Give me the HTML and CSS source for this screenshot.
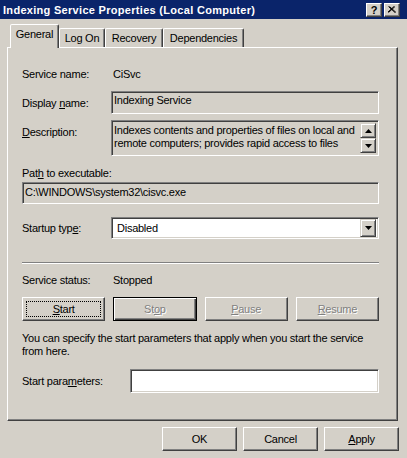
FILE: index.html
```html
<!DOCTYPE html>
<html lang="en">
<head>
    <meta charset="UTF-8">
    <title>Indexing Service Properties (Local Computer)</title>
    <link rel="stylesheet" href="styles.css">
</head>
<body>
    <div class="window">
        <div class="titlebar">
            <span class="title">Indexing Service Properties (Local Computer)</span>
            <div class="caption-btns">
                <div class="cap-btn">?</div>
                <div class="cap-btn">
                    <svg width="8" height="7" viewBox="0 0 8 7">
                        <path d="M0.5 0.5 L7 6.5 M7 0.5 L0.5 6.5 M1.5 0.5 L8 6.5 M6 0.5 L-0.5 6.5" stroke="#000" stroke-width="1" fill="none"/>
                    </svg>
                </div>
            </div>
        </div>

        <div class="tabs">
            <div class="tab active">General</div>
            <div class="tab t-logon">Log On</div>
            <div class="tab t-recovery">Recovery</div>
            <div class="tab t-deps">Dependencies</div>
        </div>

        <div class="panel">
            <div class="row row-name">
                <span class="label">Service name:</span>
                <span class="value">CiSvc</span>
            </div>

            <div class="row row-display">
                <span class="label">Display <u>n</u>ame:</span>
                <div class="field readonly">Indexing Service</div>
            </div>

            <div class="row row-desc">
                <span class="label"><u>D</u>escription:</span>
                <div class="field readonly desc">
                    <div class="desc-text">Indexes contents and properties of files on local and remote computers; provides rapid access to files</div>
                    <div class="scroll">
                        <div class="arrow-btn">
                            <svg width="7" height="4" viewBox="0 0 7 4"><polygon points="3.5,0 7,4 0,4" fill="#000"/></svg>
                        </div>
                        <div class="arrow-btn">
                            <svg width="7" height="4" viewBox="0 0 7 4"><polygon points="0,0 7,0 3.5,4" fill="#000"/></svg>
                        </div>
                    </div>
                </div>
            </div>

            <div class="path-label">Pat<u>h</u> to executable:</div>
            <div class="field readonly path">C:\WINDOWS\system32\cisvc.exe</div>

            <div class="row row-startup">
                <span class="label">Startup typ<u>e</u>:</span>
                <div class="field select">
                    <span class="select-text">Disabled</span>
                    <div class="arrow-btn drop">
                        <svg width="7" height="4" viewBox="0 0 7 4"><polygon points="0,0 7,0 3.5,4" fill="#000"/></svg>
                    </div>
                </div>
            </div>

            <div class="separator"></div>

            <div class="row row-status">
                <span class="label">Service status:</span>
                <span class="value">Stopped</span>
            </div>

            <div class="svc-buttons">
                <div class="btn focus"><u>S</u>tart</div>
                <div class="btn default disabled">St<u>o</u>p</div>
                <div class="btn disabled"><u>P</u>ause</div>
                <div class="btn disabled"><u>R</u>esume</div>
            </div>

            <p class="note">You can specify the start parameters that apply when you start the service from here.</p>

            <div class="row row-params">
                <span class="label params-label">Start para<u>m</u>eters:</span>
                <div class="field input"></div>
            </div>
        </div>

        <div class="footer">
            <div class="btn">OK</div>
            <div class="btn">Cancel</div>
            <div class="btn"><u>A</u>pply</div>
        </div>
    </div>
</body>
</html>
```

FILE: styles.css
```css
body {
    margin: 0;
    background-color: #d4d0c8;
    font-family: "Liberation Sans", Arial, sans-serif;
    font-size: 11px;
    letter-spacing: -0.25px;
    color: #000;
}

.window {
    width: 407px;
    height: 458px;
    overflow: hidden;
}

/* title bar */
.titlebar {
    height: 19px;
    background-color: #0a246a;
    color: #fff;
    display: flex;
    align-items: center;
    justify-content: space-between;
    padding: 0 7px 0 3px;
}

.title {
    font-weight: bold;
    font-size: 11px;
    letter-spacing: 0.3px;
}

.caption-btns {
    display: flex;
    gap: 2px;
}

.cap-btn {
    width: 16px;
    height: 14px;
    box-sizing: border-box;
    background-color: #d4d0c8;
    border: 1px solid;
    border-color: #fff #404040 #404040 #fff;
    box-shadow: inset -1px -1px #808080;
    color: #000;
    font-weight: bold;
    font-size: 11px;
    display: flex;
    align-items: center;
    justify-content: center;
}

/* tabs */
.tabs {
    display: flex;
    align-items: flex-end;
    height: 23px;
    margin: 5px 0 0 10px;
}

.tab {
    height: 19px;
    box-sizing: border-box;
    border: 1px solid;
    border-bottom: none;
    border-color: #fff #404040 transparent #fff;
    box-shadow: inset -1px 0 #808080;
    border-radius: 2px 2px 0 0;
    display: flex;
    align-items: center;
    justify-content: center;
    padding-bottom: 1px;
}

.tab.active {
    position: relative;
    height: 24px;
    width: 49px;
    margin-bottom: -1px;
    background-color: #d4d0c8;
    padding-bottom: 5px;
}

.t-logon { width: 46px; }
.t-recovery { width: 58px; }
.t-deps { width: 81px; }

/* property page */
.panel {
    margin-left: 7px;
    width: 391px;
    height: 374px;
    box-sizing: border-box;
    border: 1px solid;
    border-color: #fff #404040 #404040 #fff;
    box-shadow: inset -1px -1px #808080;
    padding: 0 18px 0 14px;
}

.row {
    display: flex;
    align-items: center;
}

.label {
    width: 89px;
    flex: none;
}

.value {
    padding-left: 2px;
}

.field {
    box-sizing: border-box;
    border: 1px solid;
    border-color: #808080 #fff #fff #808080;
    box-shadow: inset 1px 1px #404040, inset -1px -1px #d4d0c8;
}

.readonly {
    background-color: #d4d0c8;
}

.row-name {
    margin-top: 19px;
    height: 14px;
}

.row-display {
    margin-top: 10px;
    height: 23px;
}

.row-display .field {
    width: 268px;
    height: 23px;
    padding: 2px 0 0 2px;
}

.row-desc {
    margin-top: 6px;
    height: 36px;
    align-items: flex-start;
}

.row-desc .label {
    padding-top: 6px;
}

.desc {
    width: 268px;
    height: 36px;
    display: flex;
    padding: 2px 2px 2px 2px;
}

.desc-text {
    flex: 1;
    line-height: 13px;
    padding-top: 1px;
}

.scroll {
    display: flex;
    flex-direction: column;
}

.arrow-btn {
    width: 16px;
    height: 16px;
    box-sizing: border-box;
    background-color: #d4d0c8;
    border: 1px solid;
    border-color: #d4d0c8 #404040 #404040 #d4d0c8;
    box-shadow: inset 1px 1px #fff, inset -1px -1px #808080;
    display: flex;
    align-items: center;
    justify-content: center;
}

.path-label {
    margin-top: 10px;
    height: 14px;
    line-height: 14px;
}

.path {
    margin-top: 2px;
    height: 22px;
    padding: 3px 0 0 2px;
}

.row-startup {
    margin-top: 13px;
    height: 22px;
}

.select {
    width: 268px;
    height: 22px;
    background-color: #fff;
    display: flex;
    align-items: center;
    justify-content: space-between;
    padding: 2px;
}

.select-text {
    padding-left: 3px;
}

.arrow-btn.drop {
    height: 18px;
}

.separator {
    margin-top: 23px;
    height: 0;
    border-top: 1px solid #808080;
    border-bottom: 1px solid #fff;
}

.row-status {
    margin-top: 9px;
    height: 14px;
}

/* buttons */
.btn {
    height: 24px;
    box-sizing: border-box;
    background-color: #d4d0c8;
    border: 1px solid;
    border-color: #fff #404040 #404040 #fff;
    box-shadow: inset -1px -1px #808080;
    display: flex;
    align-items: center;
    justify-content: center;
}

.btn.focus {
    outline: 1px dotted #000;
    outline-offset: -5px;
}

.btn.default {
    border-color: #000;
    box-shadow: inset 1px 1px #fff, inset -1px -1px #404040, inset -2px -2px #808080;
}

.btn.disabled {
    color: #808080;
    text-shadow: 1px 1px #fff;
}

.svc-buttons {
    margin-top: 10px;
    display: grid;
    grid-template-columns: repeat(4, 1fr);
    gap: 8px;
}

.note {
    margin: 11px 0 0 0;
    line-height: 13px;
}

.row-params {
    margin-top: 11px;
    height: 24px;
}

.params-label {
    width: 108px;
}

.input {
    width: 249px;
    height: 24px;
    background-color: #fff;
}

.footer {
    margin-top: 6px;
    display: flex;
    justify-content: flex-end;
    gap: 6px;
    padding-right: 8px;
}

.footer .btn {
    width: 75px;
}
```
